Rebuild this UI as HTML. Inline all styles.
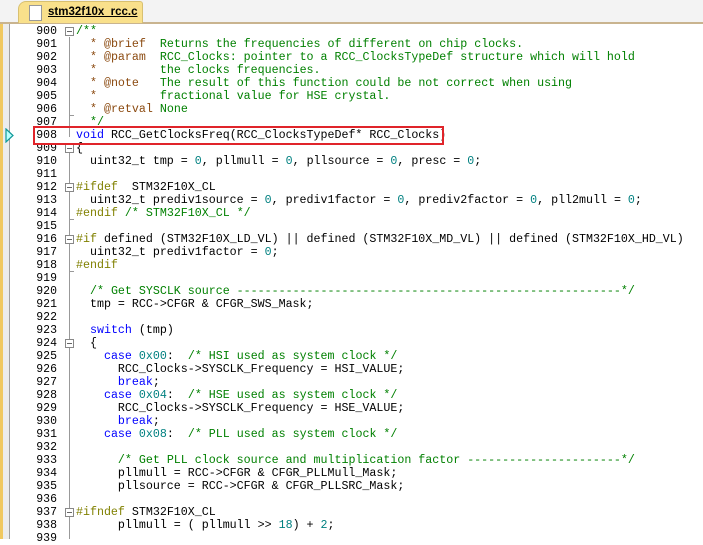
<!DOCTYPE html>
<html><head><meta charset="utf-8"><style>
*{margin:0;padding:0}
body{width:703px;height:539px;overflow:hidden;background:#fff;position:relative;font-family:"Liberation Mono",monospace;}
#tabbar{position:absolute;left:0;top:0;width:703px;height:22px;background:#f3f3f3;border-bottom:2px solid #c9b48f;}
#tab{position:absolute;left:18px;top:1px;width:123px;height:21px;background:#f9e08b;border:1px solid #d8c070;border-bottom:none;border-radius:8px 3px 0 0;}
#tab span{position:absolute;left:29px;top:4px;font:bold 11.5px "Liberation Sans",sans-serif;text-decoration:underline;color:#000}
#doc{position:absolute;left:10px;top:3px;width:11px;height:14px;background:#fff;border:1px solid #999;}
#ystrip{position:absolute;left:0;top:24px;width:3px;height:515px;background:#f0c860}
#gray{position:absolute;left:3px;top:24px;width:6px;height:515px;background:#ececec;border-right:1px solid #a0a0a0}
.l{position:absolute;left:0;height:13px;line-height:13px;font-size:11.65px;white-space:pre;color:#000}
.n{position:absolute;width:57px;text-align:right;left:0;font-size:11.5px}
.c{position:absolute;left:76px}
.g{color:#008000}.b{color:#0000ff}.t{color:#008080}.p{color:#808000}.k{color:#8b4a10}
.box{position:absolute;left:65px;width:7px;height:7px;border:1px solid #888;background:#fff}
.box:after{content:"";position:absolute;left:1px;top:3px;width:5px;height:1px;background:#666}
.vl{position:absolute;left:69px;width:1px;background:#999}
</style></head><body>
<div id="tabbar"><div id="tab"><div id="doc"></div><span>stm32f10x_rcc.c</span></div></div>
<div id="ystrip"></div><div id="gray"></div>
<svg style="position:absolute;left:5px;top:128px" width="10" height="15"><path d="M1 1 L8 7.5 L1 14 Z" fill="#bff" stroke="#199" stroke-width="1.2"/></svg>
<div class="vl" style="top:37px;height:100px"></div>
<div class="vl" style="top:115px;width:5px;height:1px"></div>
<div class="vl" style="top:150px;height:389px"></div>
<div class="box" style="top:27px"></div>
<div class="box" style="top:144px"></div>
<div class="box" style="top:183px"></div>
<div class="box" style="top:235px"></div>
<div class="box" style="top:339px"></div>
<div class="box" style="top:508px"></div>
<div class="vl" style="top:219px;width:5px;height:1px"></div>
<div class="vl" style="top:271px;width:5px;height:1px"></div>

<div class="l" style="top:25px"><span class="n">900</span><span class="c g">/**</span></div>
<div class="l" style="top:38px"><span class="n">901</span><span class="c">  <span class="k">* @brief</span>  <span class="g">Returns the frequencies of different on chip clocks.</span></span></div>
<div class="l" style="top:51px"><span class="n">902</span><span class="c">  <span class="k">* @param</span>  <span class="g">RCC_Clocks: pointer to a RCC_ClocksTypeDef structure which will hold</span></span></div>
<div class="l" style="top:64px"><span class="n">903</span><span class="c">  <span class="k">*</span>         <span class="g">the clocks frequencies.</span></span></div>
<div class="l" style="top:77px"><span class="n">904</span><span class="c">  <span class="k">* @note</span>   <span class="g">The result of this function could be not correct when using</span></span></div>
<div class="l" style="top:90px"><span class="n">905</span><span class="c">  <span class="k">*</span>         <span class="g">fractional value for HSE crystal.</span></span></div>
<div class="l" style="top:103px"><span class="n">906</span><span class="c">  <span class="k">* @retval</span> <span class="g">None</span></span></div>
<div class="l" style="top:116px"><span class="n">907</span><span class="c g">  */</span></div>
<div class="l" style="top:129px"><span class="n">908</span><span class="c"><span class="b">void</span> RCC_GetClocksFreq(RCC_ClocksTypeDef* RCC_Clocks)</span></div>
<div class="l" style="top:142px"><span class="n">909</span><span class="c">{</span></div>
<div class="l" style="top:155px"><span class="n">910</span><span class="c">  uint32_t tmp = <span class="t">0</span>, pllmull = <span class="t">0</span>, pllsource = <span class="t">0</span>, presc = <span class="t">0</span>;</span></div>
<div class="l" style="top:168px"><span class="n">911</span></div>
<div class="l" style="top:181px"><span class="n">912</span><span class="c"><span class="p">#ifdef</span>  STM32F10X_CL</span></div>
<div class="l" style="top:194px"><span class="n">913</span><span class="c">  uint32_t prediv1source = <span class="t">0</span>, prediv1factor = <span class="t">0</span>, prediv2factor = <span class="t">0</span>, pll2mull = <span class="t">0</span>;</span></div>
<div class="l" style="top:207px"><span class="n">914</span><span class="c"><span class="p">#endif</span> <span class="g">/* STM32F10X_CL */</span></span></div>
<div class="l" style="top:220px"><span class="n">915</span></div>
<div class="l" style="top:233px"><span class="n">916</span><span class="c"><span class="p">#if</span> defined (STM32F10X_LD_VL) || defined (STM32F10X_MD_VL) || defined (STM32F10X_HD_VL)</span></div>
<div class="l" style="top:246px"><span class="n">917</span><span class="c">  uint32_t prediv1factor = <span class="t">0</span>;</span></div>
<div class="l" style="top:259px"><span class="n">918</span><span class="c p">#endif</span></div>
<div class="l" style="top:272px"><span class="n">919</span></div>
<div class="l" style="top:285px"><span class="n">920</span><span class="c">  <span class="g">/* Get SYSCLK source -------------------------------------------------------*/</span></span></div>
<div class="l" style="top:298px"><span class="n">921</span><span class="c">  tmp = RCC-&gt;CFGR &amp; CFGR_SWS_Mask;</span></div>
<div class="l" style="top:311px"><span class="n">922</span></div>
<div class="l" style="top:324px"><span class="n">923</span><span class="c">  <span class="b">switch</span> (tmp)</span></div>
<div class="l" style="top:337px"><span class="n">924</span><span class="c">  {</span></div>
<div class="l" style="top:350px"><span class="n">925</span><span class="c">    <span class="b">case</span> <span class="t">0x00</span>:  <span class="g">/* HSI used as system clock */</span></span></div>
<div class="l" style="top:363px"><span class="n">926</span><span class="c">      RCC_Clocks-&gt;SYSCLK_Frequency = HSI_VALUE;</span></div>
<div class="l" style="top:376px"><span class="n">927</span><span class="c">      <span class="b">break</span>;</span></div>
<div class="l" style="top:389px"><span class="n">928</span><span class="c">    <span class="b">case</span> <span class="t">0x04</span>:  <span class="g">/* HSE used as system clock */</span></span></div>
<div class="l" style="top:402px"><span class="n">929</span><span class="c">      RCC_Clocks-&gt;SYSCLK_Frequency = HSE_VALUE;</span></div>
<div class="l" style="top:415px"><span class="n">930</span><span class="c">      <span class="b">break</span>;</span></div>
<div class="l" style="top:428px"><span class="n">931</span><span class="c">    <span class="b">case</span> <span class="t">0x08</span>:  <span class="g">/* PLL used as system clock */</span></span></div>
<div class="l" style="top:441px"><span class="n">932</span></div>
<div class="l" style="top:454px"><span class="n">933</span><span class="c">      <span class="g">/* Get PLL clock source and multiplication factor ----------------------*/</span></span></div>
<div class="l" style="top:467px"><span class="n">934</span><span class="c">      pllmull = RCC-&gt;CFGR &amp; CFGR_PLLMull_Mask;</span></div>
<div class="l" style="top:480px"><span class="n">935</span><span class="c">      pllsource = RCC-&gt;CFGR &amp; CFGR_PLLSRC_Mask;</span></div>
<div class="l" style="top:493px"><span class="n">936</span></div>
<div class="l" style="top:506px"><span class="n">937</span><span class="c"><span class="p">#ifndef</span> STM32F10X_CL</span></div>
<div class="l" style="top:519px"><span class="n">938</span><span class="c">      pllmull = ( pllmull &gt;&gt; <span class="t">18</span>) + <span class="t">2</span>;</span></div>
<div class="l" style="top:532px"><span class="n">939</span></div>
<div style="position:absolute;left:33px;top:126px;width:407px;height:15px;border:2px solid #e0242a"></div>
</body></html>
